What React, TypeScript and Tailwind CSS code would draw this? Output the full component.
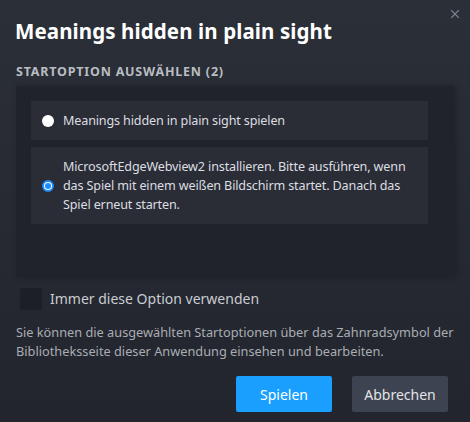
import { X } from "lucide-react";

const options = [
  { id: "play", label: "Meanings hidden in plain sight spielen", checked: false },
  {
    id: "webview",
    label:
      "MicrosoftEdgeWebview2 installieren. Bitte ausführen, wenn das Spiel mit einem weißen Bildschirm startet. Danach das Spiel erneut starten.",
    checked: true,
  },
];

function Radio({ checked }: { checked: boolean }) {
  if (checked) {
    return (
      <span className="shrink-0 w-[12px] h-[12px] rounded-full border-2 border-[#1a8cff] bg-white flex items-center justify-center">
        <span className="w-[6px] h-[6px] rounded-full bg-[#1a8cff]" />
      </span>
    );
  }
  return <span className="shrink-0 w-[12px] h-[12px] rounded-full bg-white" />;
}

export default function App() {
  return (
    <div
      className="relative w-[470px] h-[422px] overflow-hidden bg-gradient-to-b from-[#2b2f38] to-[#22252d] text-white"
      style={{ fontFamily: '"Noto Sans", "Open Sans", sans-serif' }}
    >
      <button
        type="button"
        className="absolute top-[7px] right-[8px] text-[#7a7f88]"
      >
        <X className="w-[14px] h-[14px]" strokeWidth={2} />
      </button>

      <div className="px-[16px] pt-[17px]">
        <h1 className="text-[20.5px] leading-[28px] font-bold tracking-[0.1px] -ml-[1px]">
          Meanings hidden in plain sight
        </h1>

        <p className="mt-[19px] text-[12.5px] leading-[16px] font-bold uppercase tracking-[0.8px] text-[#b9bdc2]">
          Startoption auswählen (2)
        </p>

        <div className="mt-[6px] h-[191px] bg-[#20232b] shadow-[2px_0_6px_rgba(0,0,0,0.25)] pl-[15px] pr-[26px] pt-[15px] flex flex-col gap-[7px]">
          {options.map((o) => (
            <label
              key={o.id}
              className="flex items-center gap-[9px] pl-[11px] pr-[2px] py-[10px] bg-[#2a2d36] text-[12.6px] leading-[19px] tracking-[-0.15px] text-[#dcdee1]"
            >
              <Radio checked={o.checked} />
              <span>{o.label}</span>
            </label>
          ))}
        </div>

        <div className="mt-[11px] flex items-center gap-[8px] pl-[4px]">
          <span className="w-[22px] h-[22px] bg-[#1c1f26] rounded-[2px]" />
          <span className="text-[14px] leading-[20px] text-[#c9ccd0]">
            Immer diese Option verwenden
          </span>
        </div>

        <p className="mt-[13px] text-[12.75px] leading-[19px] text-[#a9adb3]">
          Sie können die ausgewählten Startoptionen über das Zahnradsymbol der
          Bibliotheksseite dieser Anwendung einsehen und bearbeiten.
        </p>

        <div className="mt-[15px] flex justify-end gap-[20px] pr-[6px]">
          <button
            type="button"
            className="w-[96px] h-[36px] rounded-[2px] bg-[#1a9fff] text-[14px] text-white"
          >
            Spielen
          </button>
          <button
            type="button"
            className="w-[96px] h-[36px] rounded-[2px] bg-[#3d4350] text-[14px] text-[#e2e4e7]"
          >
            Abbrechen
          </button>
        </div>
      </div>
    </div>
  );
}
